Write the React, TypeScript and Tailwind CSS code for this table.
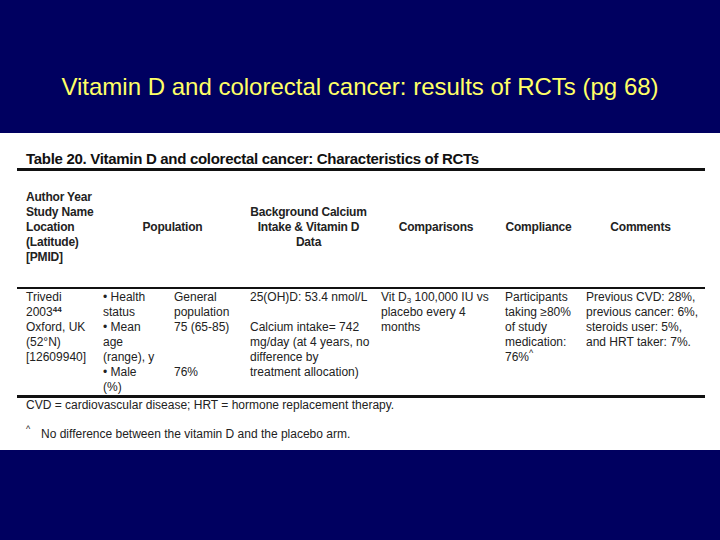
import React from "react";

const cols = "grid grid-cols-[77px_71px_76px_131px_124px_81px_123px]";

function Lines({ items }: { items: React.ReactNode[] }) {
  return (
    <div className="flex flex-col">
      {items.map((t, i) => (
        <div key={i} className="h-[15px] whitespace-nowrap">
          {t}
        </div>
      ))}
    </div>
  );
}

export default function App() {
  return (
    <div className="w-[720px] h-[540px] bg-[#000060] flex flex-col font-['Liberation_Sans',Arial,sans-serif]">
      {/* Slide title */}
      <div className="h-[133px] pt-[72px] text-center text-[24px] leading-[29px] text-[#ffff66]">
        Vitamin D and colorectal cancer: results of RCTs (pg 68)
      </div>

      {/* Scanned table */}
      <div className="h-[317px] bg-white pt-[17px] text-[#222]">
        <div className="pl-[26px] h-[18px] leading-[18px] text-[15px] font-bold tracking-[-0.3px] text-[#111]">
          Table 20. Vitamin D and colorectal cancer: Characteristics of RCTs
        </div>

        <div className="ml-[17px] w-[688px]">
          <div className="h-[3px] bg-[#111]" />

          {/* header */}
          <div className={`${cols} pl-[5px] pt-[19px] pb-[22px] text-[12px] leading-[15px] font-bold tracking-[-0.2px] items-center`}>
            <div className="pl-[4px]">
              <Lines items={["Author Year", "Study Name", "Location", "(Latitude)", "[PMID]"]} />
            </div>
            <div className="col-span-2 text-center">Population</div>
            <div className="text-center pr-[6px]">
              Background Calcium
              <br />
              Intake &amp; Vitamin D
              <br />
              Data
            </div>
            <div className="text-center pr-[6px]">Comparisons</div>
            <div className="text-center pr-[6px]">Compliance</div>
            <div className="text-center pr-[6px]">Comments</div>
          </div>

          <div className="h-[2px] bg-[#111]" />

          {/* body row */}
          <div className={`${cols} pl-[5px] pt-[1px] h-[106px] text-[12px] leading-[15px]`}>
            <div className="pl-[4px]">
              <Lines
                items={[
                  "Trivedi",
                  <span>
                    2003<span className="relative -top-[4px] text-[8px] leading-none font-bold">44</span>
                  </span>,
                  "Oxford, UK",
                  "(52°N)",
                  "[12609940]",
                ]}
              />
            </div>
            <div className="pl-[4px]">
              <Lines items={["• Health", "status", "• Mean", "age", "(range), y", "• Male", "(%)"]} />
            </div>
            <div className="pl-[4px]">
              <Lines items={["General", "population", "75 (65-85)", "", "", "76%"]} />
            </div>
            <div className="pl-[4px]">
              <Lines
                items={[
                  "25(OH)D: 53.4 nmol/L",
                  "",
                  "Calcium intake= 742",
                  "mg/day (at 4 years, no",
                  "difference by",
                  "treatment allocation)",
                ]}
              />
            </div>
            <div className="pl-[4px]">
              <Lines
                items={[
                  <span>
                    Vit D<span className="relative top-[2px] text-[8px] leading-none">3</span> 100,000 IU vs
                  </span>,
                  "placebo every 4",
                  "months",
                ]}
              />
            </div>
            <div className="pl-[4px]">
              <Lines
                items={[
                  "Participants",
                  "taking ≥80%",
                  "of study",
                  "medication:",
                  <span>
                    76%<span className="relative -top-[5px] text-[9px] leading-none">^</span>
                  </span>,
                ]}
              />
            </div>
            <div className="pl-[4px]">
              <Lines
                items={["Previous CVD: 28%,", "previous cancer: 6%,", "steroids user: 5%,", "and HRT taker: 7%."]}
              />
            </div>
          </div>

          <div className="h-[3px] bg-[#111]" />
        </div>

        {/* footnotes */}
        <div className="pl-[26px] text-[12px] leading-[15px]">
          <div>CVD = cardiovascular disease; HRT = hormone replacement therapy.</div>
          <div className="mt-[14px] flex">
            <span className="w-[15px] relative -top-[5px] text-[9px] leading-[15px]">^</span>
            <span>No difference between the vitamin D and the placebo arm.</span>
          </div>
        </div>
      </div>
    </div>
  );
}
